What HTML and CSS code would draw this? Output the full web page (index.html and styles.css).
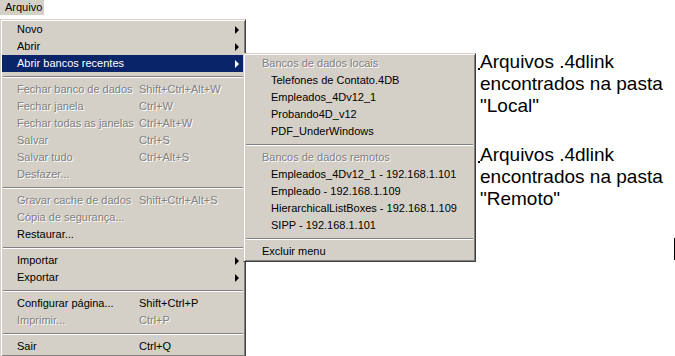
FILE: index.html
```html
<!DOCTYPE html>
<html lang="pt">
<head>
<meta charset="UTF-8" />
<title>Arquivo - Abrir bancos recentes</title>
<link rel="stylesheet" href="styles.css">
</head>
<body>
<div class="menubar">
  <span class="menubar-item">Arquivo</span>
</div>

<div class="stage">
  <ul class="menu main-menu">
    <li class="item"><span class="label">Novo</span><span class="key"></span><span class="arrow"></span></li>
    <li class="item"><span class="label">Abrir</span><span class="key"></span><span class="arrow"></span></li>
    <li class="item active"><span class="label">Abrir bancos recentes</span><span class="key"></span><span class="arrow"></span></li>
    <li class="sep"></li>
    <li class="item off"><span class="label">Fechar banco de dados</span><span class="key">Shift+Ctrl+Alt+W</span></li>
    <li class="item off"><span class="label">Fechar janela</span><span class="key">Ctrl+W</span></li>
    <li class="item off"><span class="label">Fechar todas as janelas</span><span class="key">Ctrl+Alt+W</span></li>
    <li class="item off"><span class="label">Salvar</span><span class="key">Ctrl+S</span></li>
    <li class="item off"><span class="label">Salvar tudo</span><span class="key">Ctrl+Alt+S</span></li>
    <li class="item off"><span class="label">Desfazer...</span><span class="key"></span></li>
    <li class="sep"></li>
    <li class="item off"><span class="label">Gravar cache de dados</span><span class="key">Shift+Ctrl+Alt+S</span></li>
    <li class="item off"><span class="label">Cópia de segurança...</span><span class="key"></span></li>
    <li class="item"><span class="label">Restaurar...</span><span class="key"></span></li>
    <li class="sep"></li>
    <li class="item"><span class="label">Importar</span><span class="key"></span><span class="arrow"></span></li>
    <li class="item"><span class="label">Exportar</span><span class="key"></span><span class="arrow"></span></li>
    <li class="sep"></li>
    <li class="item"><span class="label">Configurar página...</span><span class="key">Shift+Ctrl+P</span></li>
    <li class="item off"><span class="label">Imprimir...</span><span class="key">Ctrl+P</span></li>
    <li class="sep"></li>
    <li class="item"><span class="label">Sair</span><span class="key">Ctrl+Q</span></li>
  </ul>

  <ul class="menu submenu">
    <li class="head">Bancos de dados locais</li>
    <li class="sub-item">Telefones de Contato.4DB</li>
    <li class="sub-item">Empleados_4Dv12_1</li>
    <li class="sub-item">Probando4D_v12</li>
    <li class="sub-item">PDF_UnderWindows</li>
    <li class="sep"></li>
    <li class="head">Bancos de dados remotos</li>
    <li class="sub-item">Empleados_4Dv12_1 - 192.168.1.101</li>
    <li class="sub-item">Empleado - 192.168.1.109</li>
    <li class="sub-item">HierarchicalListBoxes - 192.168.1.109</li>
    <li class="sub-item">SIPP - 192.168.1.101</li>
    <li class="sep"></li>
    <li class="sub-item plain">Excluir menu</li>
  </ul>

  <div class="notes">
    <p>Arquivos .4dlink<br>encontrados na pasta<br>"Local"</p>
    <p>Arquivos .4dlink<br>encontrados na pasta<br>"Remoto"</p>
  </div>
</div>

<span class="caret"></span>
</body>
</html>
```

FILE: styles.css
```css
body, html {
  margin: 0; padding: 0;
  background: #fff;
  color: #000;
  font-family: "Liberation Sans", Arial, sans-serif;
  font-size: 11px;
  overflow: hidden;
}
.menubar {
  height: 15px;
  margin-bottom: 4px;
}
.menubar-item {
  display: inline-block;
  width: 39px;
  height: 15px;
  line-height: 15px;
  padding-left: 5px;
  background: #d4d0c8;
}
.stage {
  display: flex;
  align-items: flex-start;
}
.menu {
  list-style: none;
  margin: 0;
  padding: 0;
  background: #d4d0c8;
  border: 1px solid;
  border-color: #d4d0c8 #404040 #404040 #d4d0c8;
  box-shadow: inset 1px 1px 0 #fff, inset -1px -1px 0 #808080;
  padding: 1px;
}
.main-menu {
  width: 242px;
  flex: none;
}
.item {
  display: grid;
  grid-template-columns: 122px 1fr 4px;
  height: 17px;
  line-height: 17px;
  padding: 0 5px 0 15px;
  white-space: nowrap;
}
.item.active {
  background: #0a246a;
  color: #fff;
}
.off {
  color: #808080;
  text-shadow: 1px 1px 0 #fff;
}
.arrow {
  align-self: center;
  width: 0;
  height: 0;
  border-left: 4px solid #000;
  border-top: 4px solid transparent;
  border-bottom: 4px solid transparent;
}
.active .arrow {
  border-left-color: #fff;
}
.sep {
  height: 9px;
  margin: 0 1px;
  box-sizing: border-box;
  border-top: 4px solid transparent;
  background-clip: content-box;
}
.sep::before {
  content: "";
  display: block;
  height: 1px;
  background: #808080;
  border-bottom: 1px solid #fff;
}
.submenu {
  width: 229px;
  flex: none;
  margin: 34px 0 0 -3px;
}
.head, .sub-item {
  height: 17px;
  line-height: 17px;
  white-space: nowrap;
}
.head {
  padding-left: 17px;
  color: #808080;
  text-shadow: 1px 1px 0 #fff;
}
.sub-item {
  padding-left: 26px;
}
.sub-item.plain {
  padding-left: 17px;
}
.notes {
  margin: 32px 0 0 4px;
  font-size: 19px;
  line-height: 22px;
}
.notes p {
  position: relative;
  margin: 0 0 27px;
}
/* small tick left of each note */
.notes p::before {
  content: "";
  position: absolute;
  left: -2px;
  top: 17px;
  width: 2px;
  height: 2px;
  background: #000;
}
.caret {
  position: absolute;
  left: 674px;
  top: 238px;
  width: 1px;
  height: 22px;
  background: #000;
}
```
